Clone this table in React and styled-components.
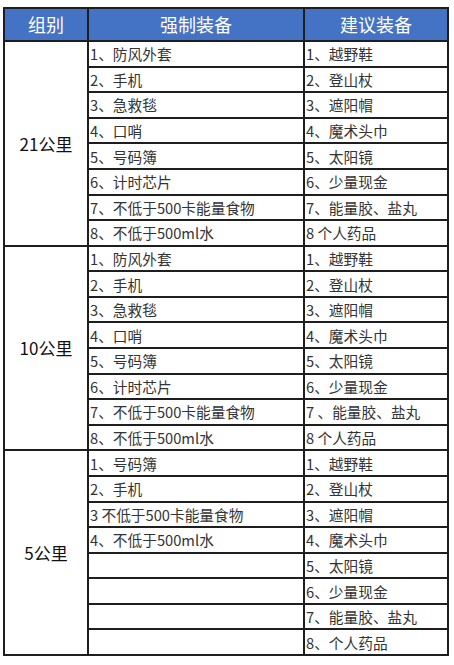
import React from "react";
import styled, { createGlobalStyle } from "styled-components";

const Global = createGlobalStyle`
  html, body { margin: 0; padding: 0; background: #fff; }
  body { font-family: "Noto Sans CJK SC", "Noto Sans", sans-serif; }
`;

const Grid = styled.div`
  margin: 7px 0 0 3px;
  width: 446px;
  height: 649px;
  box-sizing: border-box;
  display: grid;
  grid-template-columns: 84px 216px 1fr;
  grid-template-rows: 33px repeat(24, 1fr);
  border-top: 2px solid #1e1e1e;
  border-left: 2px solid #1e1e1e;
`;

const Cell = styled.div`
  box-sizing: border-box;
  border-right: 2px solid #1e1e1e;
  border-bottom: 2px solid #1e1e1e;
  display: flex;
  align-items: center;
  overflow: hidden;
  white-space: nowrap;
`;

const Head = styled(Cell)`
  background: #4472c4;
  color: #fff;
  font-size: 18px;
  justify-content: center;
  padding-bottom: 1px;
`;

const Group = styled(Cell)`
  grid-row: span 8;
  justify-content: center;
  font-size: 17px;
  font-weight: 400;
  color: #111;
`;

const Item = styled(Cell)`
  font-size: 14.7px;
  color: #333;
  padding-left: 1px;
`;

const groups = [
  {
    name: "21公里",
    req: ["1、防风外套", "2、手机", "3、急救毯", "4、口哨", "5、号码簿", "6、计时芯片", "7、不低于500卡能量食物", "8、不低于500ml水"],
    sug: ["1、越野鞋", "2、登山杖", "3、遮阳帽", "4、魔术头巾", "5、太阳镜", "6、少量现金", "7、能量胶、盐丸", "8 个人药品"],
  },
  {
    name: "10公里",
    req: ["1、防风外套", "2、手机", "3、急救毯", "4、口哨", "5、号码簿", "6、计时芯片", "7、不低于500卡能量食物", "8、不低于500ml水"],
    sug: ["1、越野鞋", "2、登山杖", "3、遮阳帽", "4、魔术头巾", "5、太阳镜", "6、少量现金", "7 、能量胶、盐丸", "8 个人药品"],
  },
  {
    name: "5公里",
    req: ["1、号码簿", "2、手机", "3 不低于500卡能量食物", "4、不低于500ml水", "", "", "", ""],
    sug: ["1、越野鞋", "2、登山杖", "3、遮阳帽", "4、魔术头巾", "5、太阳镜", "6、少量现金", "7、能量胶、盐丸", "8、个人药品"],
  },
];

export default function App() {
  return (
    <>
      <Global />
      <Grid>
        <Head>组别</Head>
        <Head>强制装备</Head>
        <Head>建议装备</Head>
        {groups.map((g) => (
          <React.Fragment key={g.name}>
            <Group style={{ gridColumn: 1 }}>{g.name}</Group>
            {g.req.map((r, i) => (
              <React.Fragment key={i}>
                <Item style={{ gridColumn: 2 }}>{r}</Item>
                <Item style={{ gridColumn: 3 }}>{g.sug[i]}</Item>
              </React.Fragment>
            ))}
          </React.Fragment>
        ))}
      </Grid>
    </>
  );
}
